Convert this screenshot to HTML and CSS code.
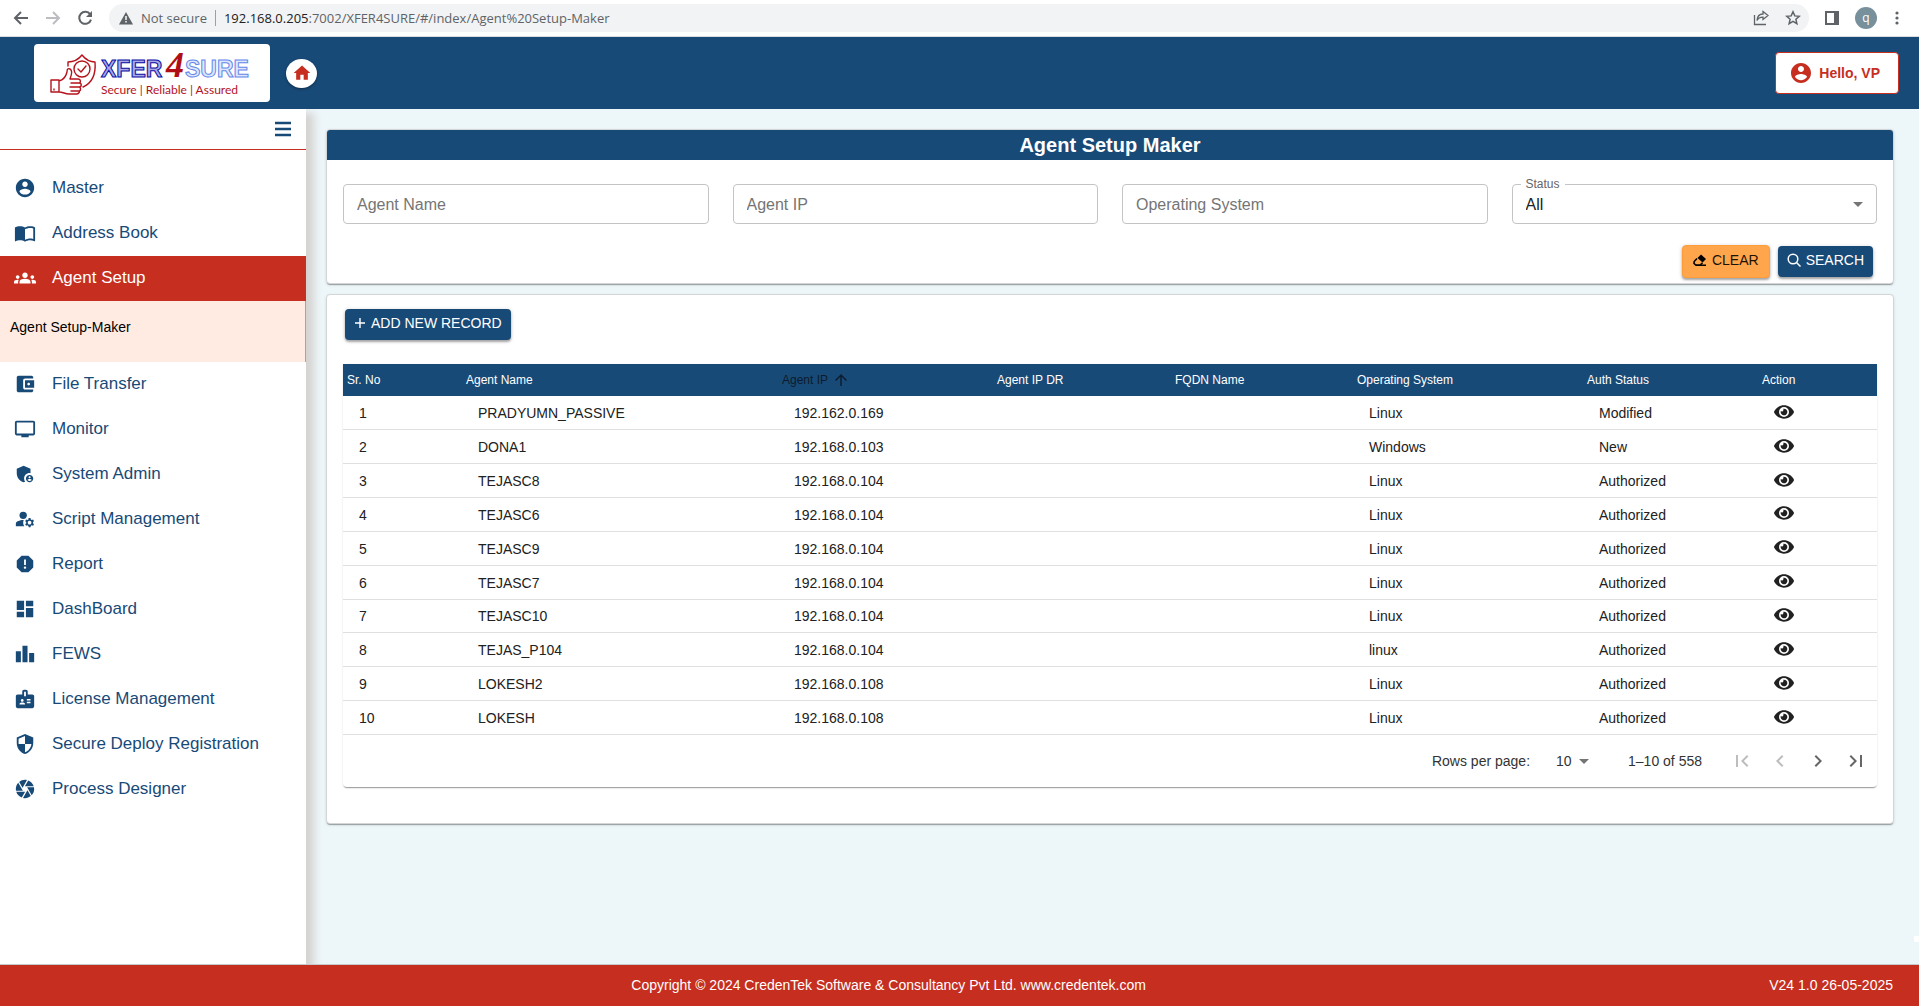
FILE: index.html
```html
<!DOCTYPE html>
<html lang="en">
<head>
<meta charset="utf-8">
<title>Agent Setup Maker</title>
<link rel="stylesheet" href="styles.css">
</head>
<body>
<svg class="sprite" aria-hidden="true">
  <symbol id="i-account" viewBox="0 0 24 24"><path d="M12 2C6.48 2 2 6.48 2 12s4.48 10 10 10 10-4.48 10-10S17.52 2 12 2zm0 3c1.66 0 3 1.34 3 3s-1.34 3-3 3-3-1.34-3-3 1.34-3 3-3zm0 14.2c-2.5 0-4.71-1.28-6-3.22.03-1.99 4-3.08 6-3.08 1.99 0 5.97 1.09 6 3.08-1.29 1.94-3.5 3.22-6 3.22z"/></symbol>
  <symbol id="i-book" viewBox="0 0 24 24"><path d="M21 5c-1.11-.35-2.33-.5-3.5-.5-1.95 0-4.05.4-5.5 1.5-1.45-1.1-3.55-1.5-5.5-1.5S2.45 4.9 1 6v14.65c0 .25.25.5.5.5.1 0 .15-.05.25-.05C3.1 20.45 5.05 20 6.5 20c1.95 0 4.05.4 5.5 1.5 1.35-.85 3.8-1.5 5.5-1.5 1.65 0 3.35.3 4.75 1.05.1.05.15.05.25.05.25 0 .5-.25.5-.5V6c-.6-.45-1.25-.75-2-1zm0 13.5c-1.1-.35-2.3-.5-3.5-.5-1.7 0-4.15.65-5.5 1.5V8c1.35-.85 3.8-1.5 5.5-1.5 1.2 0 2.4.15 3.5.5v11.5z"/></symbol>
  <symbol id="i-groups" viewBox="0 0 24 24"><path d="M12 12.75c1.63 0 3.07.39 4.24.9 1.08.48 1.76 1.56 1.76 2.73V18H6v-1.61c0-1.18.68-2.26 1.76-2.73 1.17-.52 2.61-.91 4.24-.91zM4 13c1.1 0 2-.9 2-2s-.9-2-2-2-2 .9-2 2 .9 2 2 2zm1.13 1.1c-.37-.06-.74-.1-1.13-.1-.99 0-1.93.21-2.78.58C.48 14.9 0 15.62 0 16.43V18h4.5v-1.61c0-.83.23-1.61.63-2.29zM20 13c1.1 0 2-.9 2-2s-.9-2-2-2-2 .9-2 2 .9 2 2 2zm4 3.43c0-.81-.48-1.53-1.22-1.85-.85-.37-1.79-.58-2.78-.58-.39 0-.76.04-1.13.1.4.68.63 1.46.63 2.29V18H24v-1.57zM12 6c1.66 0 3 1.34 3 3s-1.34 3-3 3-3-1.34-3-3 1.34-3 3-3z"/></symbol>
  <symbol id="i-wallet" viewBox="0 0 24 24"><path d="M21 18v1c0 1.1-.9 2-2 2H5c-1.11 0-2-.9-2-2V5c0-1.1.89-2 2-2h14c1.1 0 2 .9 2 2v1h-9c-1.11 0-2 .9-2 2v8c0 1.1.89 2 2 2h9zm-9-2h10V8H12v8zm4-2.5c-.83 0-1.5-.67-1.5-1.5s.67-1.5 1.5-1.5 1.5.67 1.5 1.5-.67 1.5-1.5 1.5z"/></symbol>
  <symbol id="i-tv" viewBox="0 0 24 24"><path d="M21 3H3c-1.1 0-2 .9-2 2v12c0 1.1.9 2 2 2h5v2h8v-2h5c1.1 0 1.99-.9 1.99-2L23 5c0-1.1-.9-2-2-2zm0 14H3V5h18v12z"/></symbol>
  <symbol id="i-admin" viewBox="0 0 24 24"><path d="M17 11c.34 0 .67.04 1 .09V6.27L10.5 3 3 6.27v4.91c0 4.54 3.2 8.79 7.5 9.82.55-.13 1.08-.32 1.6-.55-.69-.98-1.1-2.17-1.1-3.45 0-3.31 2.69-6 6-6z"/><path d="M17 13c-2.21 0-4 1.79-4 4s1.79 4 4 4 4-1.79 4-4-1.79-4-4-4zm0 1.38c.62 0 1.12.51 1.12 1.12s-.51 1.12-1.12 1.12-1.12-.51-1.12-1.12.5-1.12 1.12-1.12zm0 5.37c-.93 0-1.74-.46-2.24-1.17.05-.72 1.51-1.08 2.24-1.08s2.19.36 2.24 1.08c-.5.71-1.31 1.17-2.24 1.17z"/></symbol>
  <symbol id="i-manage" viewBox="0 0 24 24"><circle cx="10" cy="8" r="4"/><path d="M10.67 13.02c-.22-.01-.44-.02-.67-.02-2.42 0-4.68.67-6.61 1.82-.88.52-1.39 1.5-1.39 2.53V20h9.26c-.79-1.13-1.26-2.51-1.26-4 0-1.07.25-2.07.67-2.98zM20.75 16c0-.22-.03-.42-.06-.63l1.14-1.01-1-1.73-1.45.49c-.32-.27-.68-.48-1.08-.63L18 11h-2l-.3 1.49c-.4.15-.76.36-1.08.63l-1.45-.49-1 1.73 1.14 1.01c-.03.21-.06.41-.06.63s.03.42.06.63l-1.14 1.01 1 1.73 1.45-.49c.32.27.68.48 1.08.63L16 21h2l.3-1.49c.4-.15.76-.36 1.08-.63l1.45.49 1-1.73-1.14-1.01c.03-.21.06-.41.06-.63zM17 18c-1.1 0-2-.9-2-2s.9-2 2-2 2 .9 2 2-.9 2-2 2z"/></symbol>
  <symbol id="i-report" viewBox="0 0 24 24"><path d="M15.73 3H8.27L3 8.27v7.46L8.27 21h7.46L21 15.73V8.27L15.73 3zM12 17.3c-.72 0-1.3-.58-1.3-1.3 0-.72.58-1.3 1.3-1.3.72 0 1.3.58 1.3 1.3 0 .72-.58 1.3-1.3 1.3zm1-4.3h-2V7h2v6z"/></symbol>
  <symbol id="i-dash" viewBox="0 0 24 24"><path d="M3 13h8V3H3v10zm0 8h8v-6H3v6zm10 0h8V11h-8v10zm0-18v6h8V3h-8z"/></symbol>
  <symbol id="i-bars" viewBox="0 0 24 24"><path d="M7.5 21H2V9h5.5v12zm7.25-18h-5.5v18h5.5V3zM22 11h-5.5v10H22V11z"/></symbol>
  <symbol id="i-badge" viewBox="0 0 24 24"><path d="M20 7h-5V4c0-1.1-.9-2-2-2h-2c-1.1 0-2 .9-2 2v3H4c-1.1 0-2 .9-2 2v11c0 1.1.9 2 2 2h16c1.1 0 2-.9 2-2V9c0-1.1-.9-2-2-2zM9 12c.83 0 1.5.67 1.5 1.5S9.83 15 9 15s-1.5-.67-1.5-1.5S8.17 12 9 12zm3 6H6v-.75c0-1 2-1.5 3-1.5s3 .5 3 1.5V18zm1-9h-2V4h2v5zm5 7.5h-4V15h4v1.5zm0-3h-4V12h4v1.5z"/></symbol>
  <symbol id="i-shield" viewBox="0 0 24 24"><path d="M12 1 3 5v6c0 5.55 3.84 10.74 9 12 5.16-1.26 9-6.45 9-12V5l-9-4zm0 10.99h7c-.53 4.12-3.28 7.79-7 8.94V12H5V6.3l7-3.11v8.8z"/></symbol>
  <symbol id="i-camera" viewBox="0 0 24 24"><path d="M9.4 10.5l4.77-8.26C13.47 2.09 12.75 2 12 2c-2.4 0-4.6.85-6.32 2.25l3.66 6.35.06-.1zM21.54 9c-.92-2.92-3.15-5.26-6-6.34L11.88 9h9.66zm.26 1h-7.49l.29.5 4.76 8.25C21 16.97 22 14.61 22 12c0-.69-.07-1.35-.2-2zM8.54 12l-3.9-6.75C3.01 7.03 2 9.39 2 12c0 .69.07 1.35.2 2h7.49l-1.15-2zm-6.08 3c.92 2.92 3.15 5.26 6 6.34L12.12 15H2.46zm11.27 0l-3.9 6.76c.7.15 1.42.24 2.17.24 2.4 0 4.6-.85 6.32-2.25l-3.66-6.35-.93 1.6z"/></symbol>
  <symbol id="i-eye" viewBox="0 0 576 512"><path d="M572.52 241.4C518.29 135.59 410.93 64 288 64S57.68 135.64 3.48 241.41a32.35 32.35 0 0 0 0 29.19C57.71 376.41 165.07 448 288 448s230.32-71.64 284.52-177.41a32.35 32.35 0 0 0 0-29.19zM288 400a144 144 0 1 1 144-144 143.93 143.93 0 0 1-144 144zm0-240a95.31 95.31 0 0 0-25.31 3.79 47.85 47.85 0 0 1-66.9 66.9A95.78 95.78 0 1 0 288 160z"/></symbol>
  <symbol id="i-down" viewBox="0 0 24 24"><path d="m7 10 5 5 5-5z"/></symbol>
</svg>

<div class="browser">
  <button class="tool" aria-label="Back"><svg width="16" height="16" viewBox="0 0 16 16" fill="none" stroke="#5f6368" stroke-width="2"><path d="M15 8H2M8 2 2 8l6 6"/></svg></button>
  <button class="tool" aria-label="Forward"><svg width="16" height="16" viewBox="0 0 16 16" fill="none" stroke="#bbbdc0" stroke-width="2"><path d="M1 8h13M8 2l6 6-6 6"/></svg></button>
  <button class="tool" aria-label="Reload"><svg width="16" height="16" viewBox="0 0 16 16"><path d="M13.2 4.4A6 6 0 1 0 14 9.600" fill="none" stroke="#5f6368" stroke-width="2"/><path d="M15 1v6H9z" fill="#5f6368"/></svg></button>
  <div class="address">
    <svg width="14" height="14" viewBox="0 0 14 14"><path d="M7 1 0 13.500h14z" fill="#5f6368"/><path d="M6.200 5h1.600v4H6.200zM6.200 10h1.600v1.600H6.200z" fill="#f1f3f4"/></svg>
    <span class="insecure">Not secure</span>
    <span class="url"><b>192.168.0.205</b>:7002/XFER4SURE/#/index/Agent%20Setup-Maker</span>
    <button class="tool" aria-label="Share"><svg width="16" height="16" viewBox="0 0 16 16" fill="none" stroke="#5f6368" stroke-width="1.300"><path d="M1.500 5v9.500H13M10 1.500l5 4-5 4V7.200c-3 0-5 1-6 3.300.3-4 2.500-6.500 6-6.500z"/></svg></button>
    <button class="tool" aria-label="Bookmark"><svg width="16" height="16" viewBox="0 0 16 16" fill="none" stroke="#5f6368" stroke-width="1.500"><path d="M8 1.800l1.800 4.100 4.500.4-3.400 3 1 4.400L8 11.400l-3.900 2.300 1-4.400-3.400-3 4.500-.4z"/></svg></button>
  </div>
  <button class="tool" aria-label="Side panel"><svg width="14" height="14" viewBox="0 0 14 14"><path d="M1 1h12v12H1z" fill="none" stroke="#5f6368" stroke-width="2"/><path d="M9 1h4v12H9z" fill="#5f6368"/></svg></button>
  <button class="avatar" aria-label="Profile">q</button>
  <button class="tool" aria-label="Browser menu"><svg width="4" height="14" viewBox="0 0 4 14" fill="#5f6368"><circle cx="2" cy="2" r="1.600"/><circle cx="2" cy="7" r="1.600"/><circle cx="2" cy="12" r="1.600"/></svg></button>
</div>

<header class="topbar">
  <a class="logo" href="#">
    <svg width="236" height="58" viewBox="0 0 236 58" role="img">
      <g fill="none" stroke="#b5121b" stroke-width="1.400" stroke-linejoin="round" stroke-linecap="round">
        <path d="M34 22v-4c6 0 10-2 14-7 4 5 8 7 13 7 1 12-3 21-12 25"/>
        <circle cx="48" cy="25" r="8"/><path d="m44 25 3 3 5-6"/>
        <path d="M17 36h8v12h-8zM25 37c4-1 7-5 8-9 0-3 1-4 3-3 2 1 2 5 0 10h8c3 0 3 4 1 4 3 0 3 4 0 4 2 0 2 4 0 4 1 0 0 3-2 3h-8c-4 0-6-2-10-2M37 39h8M36 43h9M37 47h8"/>
        <path d="M20 45v1"/>
      </g>
      <text class="mark mark-dark" x="67" y="33">XFER</text>
      <text class="mark mark-light" x="151" y="33">SURE</text>
      <text class="mark-four" x="132" y="33">4</text>
      <text class="tagline" x="67" y="50">Secure | Reliable | Assured</text>
    </svg>
  </a>
  <a class="home" href="#" aria-label="Home"><svg width="20" height="20" viewBox="0 0 24 24"><path d="M10 20v-6h4v6h5v-8h3L12 3 2 12h3v8z"/></svg></a>
  <button class="user"><svg width="24" height="24"><use href="#i-account"/></svg>Hello, VP</button>
</header>

<div class="layout">
  <aside class="sidebar">
    <div class="toggle"><button aria-label="Toggle menu"><svg width="18" height="18" viewBox="0 0 18 18" fill="none" stroke="currentColor" stroke-width="2.500"><path d="M1 3h16M1 9h16M1 15h16"/></svg></button></div>
    <nav class="menu">
      <a href="#"><svg><use href="#i-account"/></svg>Master</a>
      <a href="#"><svg><use href="#i-book"/></svg>Address Book</a>
      <a href="#" class="active"><svg><use href="#i-groups"/></svg>Agent Setup</a>
      <a href="#" class="sub">Agent Setup-Maker</a>
      <a href="#"><svg><use href="#i-wallet"/></svg>File Transfer</a>
      <a href="#"><svg><use href="#i-tv"/></svg>Monitor</a>
      <a href="#"><svg><use href="#i-admin"/></svg>System Admin</a>
      <a href="#"><svg><use href="#i-manage"/></svg>Script Management</a>
      <a href="#"><svg><use href="#i-report"/></svg>Report</a>
      <a href="#"><svg><use href="#i-dash"/></svg>DashBoard</a>
      <a href="#"><svg><use href="#i-bars"/></svg>FEWS</a>
      <a href="#"><svg><use href="#i-badge"/></svg>License Management</a>
      <a href="#"><svg><use href="#i-shield"/></svg>Secure Deploy Registration</a>
      <a href="#"><svg><use href="#i-camera"/></svg>Process Designer</a>
    </nav>
  </aside>

  <main class="content">
    <section class="card">
      <h1>Agent Setup Maker</h1>
      <form class="filters">
        <div class="fields">
          <input type="text" placeholder="Agent Name" aria-label="Agent Name">
          <input type="text" placeholder="Agent IP" aria-label="Agent IP">
          <input type="text" placeholder="Operating System" aria-label="Operating System">
          <div class="select-field">
            <label for="status">Status</label>
            <select id="status"><option>All</option></select>
            <svg width="24" height="24"><use href="#i-down"/></svg>
          </div>
        </div>
        <div class="actions">
          <button type="reset" class="btn btn-clear"><svg width="14" height="14" viewBox="0 0 14 14"><path d="M8 1.500 13 6 9.600 9.400 4.500 5z"/><path d="M4 5.500 1.200 8.500 1 10.500 3 12.200h4L9.500 9.700" fill="none" stroke="#000" stroke-width="1.600"/><path d="M3 11.500h10V13H3z"/></svg>CLEAR</button>
          <button type="button" class="btn btn-search"><svg width="14" height="14" viewBox="0 0 14 14" fill="none" stroke="#fff" stroke-width="1.500"><circle cx="6" cy="6" r="4.800"/><path d="m9.500 9.500 4 4"/></svg>SEARCH</button>
        </div>
      </form>
    </section>

    <section class="card records">
      <button class="btn btn-add"><svg width="12" height="12" viewBox="0 0 12 12" fill="none" stroke="#fff" stroke-width="1.400"><path d="M6 1v10M1 6h10"/></svg>ADD NEW RECORD</button>
      <div class="grid">
        <table>
          <colgroup><col class="c-no"><col class="c-name"><col class="c-ip"><col class="c-dr"><col class="c-fqdn"><col class="c-os"><col class="c-auth"><col class="c-no"></colgroup>
          <thead><tr><th>Sr. No</th><th>Agent Name</th><th class="sorted"><span>Agent IP<svg width="18" height="18" viewBox="0 0 24 24"><path d="m4 12 1.410 1.410L11 7.830V20h2V7.830l5.580 5.590L20 12l-8-8-8 8z"/></svg></span></th><th>Agent IP DR</th><th>FQDN Name</th><th>Operating System</th><th>Auth Status</th><th>Action</th></tr></thead>
          <tbody>
            <tr><td>1</td><td>PRADYUMN_PASSIVE</td><td>192.162.0.169</td><td></td><td></td><td>Linux</td><td>Modified</td><td><button class="view" aria-label="View"><svg><use href="#i-eye"/></svg></button></td></tr>
            <tr><td>2</td><td>DONA1</td><td>192.168.0.103</td><td></td><td></td><td>Windows</td><td>New</td><td><button class="view" aria-label="View"><svg><use href="#i-eye"/></svg></button></td></tr>
            <tr><td>3</td><td>TEJASC8</td><td>192.168.0.104</td><td></td><td></td><td>Linux</td><td>Authorized</td><td><button class="view" aria-label="View"><svg><use href="#i-eye"/></svg></button></td></tr>
            <tr><td>4</td><td>TEJASC6</td><td>192.168.0.104</td><td></td><td></td><td>Linux</td><td>Authorized</td><td><button class="view" aria-label="View"><svg><use href="#i-eye"/></svg></button></td></tr>
            <tr><td>5</td><td>TEJASC9</td><td>192.168.0.104</td><td></td><td></td><td>Linux</td><td>Authorized</td><td><button class="view" aria-label="View"><svg><use href="#i-eye"/></svg></button></td></tr>
            <tr><td>6</td><td>TEJASC7</td><td>192.168.0.104</td><td></td><td></td><td>Linux</td><td>Authorized</td><td><button class="view" aria-label="View"><svg><use href="#i-eye"/></svg></button></td></tr>
            <tr><td>7</td><td>TEJASC10</td><td>192.168.0.104</td><td></td><td></td><td>Linux</td><td>Authorized</td><td><button class="view" aria-label="View"><svg><use href="#i-eye"/></svg></button></td></tr>
            <tr><td>8</td><td>TEJAS_P104</td><td>192.168.0.104</td><td></td><td></td><td>linux</td><td>Authorized</td><td><button class="view" aria-label="View"><svg><use href="#i-eye"/></svg></button></td></tr>
            <tr><td>9</td><td>LOKESH2</td><td>192.168.0.108</td><td></td><td></td><td>Linux</td><td>Authorized</td><td><button class="view" aria-label="View"><svg><use href="#i-eye"/></svg></button></td></tr>
            <tr><td>10</td><td>LOKESH</td><td>192.168.0.108</td><td></td><td></td><td>Linux</td><td>Authorized</td><td><button class="view" aria-label="View"><svg><use href="#i-eye"/></svg></button></td></tr>
          </tbody>
        </table>
        <div class="pager">
          <label for="rows">Rows per page:</label>
          <div class="rows">
            <select id="rows"><option>10</option></select>
            <svg width="24" height="24"><use href="#i-down"/></svg>
          </div>
          <span class="range">1–10 of 558</span>
          <div class="pages">
            <button disabled aria-label="First page"><svg viewBox="0 0 24 24"><path d="M18.410 16.590 13.820 12l4.590-4.590L17 6l-6 6 6 6zM6 6h2v12H6z"/></svg></button>
            <button disabled aria-label="Previous page"><svg viewBox="0 0 24 24"><path d="M15.410 7.410 14 6l-6 6 6 6 1.410-1.410L10.830 12z"/></svg></button>
            <button aria-label="Next page"><svg viewBox="0 0 24 24"><path d="M10 6 8.590 7.410 13.170 12l-4.580 4.590L10 18l6-6z"/></svg></button>
            <button aria-label="Last page"><svg viewBox="0 0 24 24"><path d="M5.590 7.410 10.180 12l-4.590 4.590L7 18l6-6-6-6zM16 6h2v12h-2z"/></svg></button>
          </div>
        </div>
      </div>
    </section>
    <span class="edge-tab"></span>
  </main>
</div>

<footer class="footer">
  <span class="copyright">Copyright © 2024 CredenTek Software &amp; Consultancy Pvt Ltd. www.credentek.com</span>
  <span>V24 1.0 26-05-2025</span>
</footer>
</body>
</html>
```
FILE: styles.css
```css
:root {
  --navy: #184a78;
  --red: #c62e1f;
  --page: #edf6f9;
}

* { box-sizing: border-box; }

body {
  margin: 0;
  min-height: 100vh;
  display: flex;
  flex-direction: column;
  font-family: "Liberation Sans", Arial, sans-serif;
  font-size: 14px;
  color: #212121;
  background: var(--page);
}

button, input, select { font: inherit; color: inherit; }
button { border: 0; background: none; padding: 0; cursor: pointer; }
a { text-decoration: none; color: inherit; }
svg { display: block; flex: none; }
.sprite { position: absolute; width: 0; height: 0; }

/* Browser toolbar */
.browser {
  display: flex;
  align-items: center;
  gap: 16px;
  height: 37px;
  padding: 0 20px 0 13px;
  background: #fff;
  border-bottom: 1px solid #dadce0;
  font-family: "Open Sans", "Noto Sans", sans-serif;
  font-size: 13px;
  color: #5f6368;
}
.browser .tool { flex: none; }
.address {
  flex: 1;
  display: flex;
  align-items: center;
  gap: 8px;
  height: 28px;
  padding: 0 8px 0 10px;
  border-radius: 14px;
  background: #f1f3f4;
}
.address .tool { margin-left: 8px; }
.insecure { padding-right: 8px; border-right: 1px solid #9aa0a6; line-height: 16px; }
.url { flex: 1; }
.url b { font-weight: 400; color: #202124; }
.avatar {
  width: 22px;
  height: 22px;
  margin-right: 2px;
  border-radius: 50%;
  background: #78909c;
  color: #fff;
  font-size: 12px;
  line-height: 20px;
}

/* Application header */
.topbar {
  display: flex;
  align-items: center;
  gap: 16px;
  height: 72px;
  padding: 0 20px 0 34px;
  background: var(--navy);
}
.logo { border-radius: 4px; background: #fff; }
.mark { font: 700 23px "Liberation Sans", Arial, sans-serif; stroke-width: 1; }
.mark-dark { fill: #a9a9e6; stroke: #0a0aa5; }
.mark-light { fill: #dfe7fb; stroke: #6488ea; }
.mark-four { font: italic 700 36px "Liberation Serif", "Times New Roman", serif; fill: #b00e14; }
.tagline { font: 12px Lato, sans-serif; fill: #b5121b; }
.home {
  display: grid;
  place-items: center;
  width: 31px;
  height: 29px;
  border-radius: 50%;
  background: #fff;
  fill: var(--red);
  box-shadow: 0 1px 3px rgba(0, 0, 0, .4);
}
.user {
  display: flex;
  align-items: center;
  gap: 6px;
  height: 42px;
  margin-left: auto;
  padding: 0 18px 0 13px;
  border: 1px solid var(--red);
  border-radius: 4px;
  background: #fff;
  color: var(--red);
  fill: var(--red);
  font-weight: 700;
}

/* Sidebar */
.layout { flex: 1; display: flex; }
.sidebar {
  flex: 0 0 306px;
  background: #fff;
  color: var(--navy);
  box-shadow: 6px 6px 8px 2px #d5d3d2;
  clip-path: inset(0 -20px 0 0);
}
.toggle {
  display: flex;
  justify-content: flex-end;
  height: 41px;
  padding: 11px 14px 0 0;
  border-bottom: 1px solid var(--red);
}
.toggle button { height: 18px; }
.menu { padding-top: 16px; }
.menu a {
  display: flex;
  align-items: center;
  gap: 16px;
  height: 45px;
  padding: 0 0 2px 14px;
  font-size: 17px;
  fill: currentColor;
}
.menu svg { width: 22px; height: 22px; }
.menu .active { background: var(--red); color: #fff; }
.menu .sub {
  height: 61px;
  padding: 0 0 10px 10px;
  border-right: 1px solid #4fc3e8;
  background: #ffebe2;
  color: #000;
  font-size: 14px;
}

/* Cards */
.content {
  position: relative;
  flex: 1;
  min-width: 0;
  display: flex;
  flex-direction: column;
  gap: 10px;
  padding: 20px 25px 20px 20px;
}
.card {
  border: 1px solid #d3d5d6;
  border-radius: 4px;
  background: #fff;
  box-shadow: 0 2px 1px -1px rgba(0, 0, 0, .3), 0 1px 3px rgba(0, 0, 0, .12);
}
h1 {
  margin: 0;
  border-radius: 3px 3px 0 0;
  background: var(--navy);
  color: #fff;
  font-size: 20px;
  line-height: 30px;
  text-align: center;
}
.filters { padding: 24px 16px 5px; }
.fields { display: grid; grid-template-columns: repeat(4, 1fr); gap: 24px; }
.fields input, .fields select {
  width: 100%;
  height: 40px;
  padding: 0 13px;
  border: 1px solid #c4c4c4;
  border-radius: 4px;
  background: transparent;
  font-size: 16px;
  outline: none;
}
.fields input { padding-top: 1px; }
.fields input::placeholder { color: #757575; opacity: 1; }
select { appearance: none; }
.select-field { display: grid; align-items: center; position: relative; }
.select-field select, .select-field svg { grid-area: 1 / 1; }
.select-field svg {
  justify-self: end;
  margin-right: 7px;
  fill: #757575;
  pointer-events: none;
}
.select-field label {
  position: absolute;
  top: -7px;
  left: 9px;
  padding: 0 5px;
  background: #fff;
  color: #666;
  font-size: 12px;
  line-height: 14px;
}

/* Buttons */
.actions {
  display: flex;
  justify-content: flex-end;
  align-items: center;
  gap: 8px;
  padding: 21px 4px 0 0;
}
.btn {
  display: flex;
  align-items: center;
  gap: 5px;
  height: 31px;
  padding: 0 9px 3px;
  border-radius: 4px;
  background: var(--navy);
  color: #fff;
  line-height: 16px;
  box-shadow: 0 2px 2px rgba(0, 0, 0, .25), 0 1px 4px rgba(0, 0, 0, .2);
}
.btn-clear {
  height: 33px;
  padding: 0 10px 3px;
  border: 1px solid #ff9d3b;
  background: #ffa64d;
  color: #1d1206;
}

/* Records table */
.records { padding: 14px 16px 36px; }
.btn-add { margin: 0 2px 24px; }
.grid {
  border-radius: 0 0 4px 4px;
  box-shadow: 0 2px 1px -1px rgba(0, 0, 0, .3), 0 1px 2px rgba(0, 0, 0, .16);
}
table {
  width: 100%;
  height: 371px;
  table-layout: fixed;
  border-collapse: collapse;
}
.c-no { width: 119px; }
.c-name { width: 316px; }
.c-ip { width: 215px; }
.c-dr { width: 178px; }
.c-fqdn { width: 182px; }
.c-os { width: 230px; }
.c-auth { width: 175px; }
th {
  height: 32px;
  padding: 0 4px;
  background: var(--navy);
  color: #fff;
  font-size: 12px;
  font-weight: 400;
  text-align: left;
}
.sorted { color: #0c1c2c; fill: #0c1c2c; }
.sorted span { display: flex; align-items: center; gap: 4px; }
td { height: 33px; padding: 1px 16px 0; border-bottom: 1px solid #e0e0e0; }
.view { display: block; margin-top: -3px; fill: #212121; }
.view svg { width: 20px; height: 18px; }

/* Pagination */
.pager {
  display: flex;
  align-items: center;
  justify-content: flex-end;
  height: 52px;
  padding: 0 2px 1px 0;
  color: #333;
}
.rows { display: grid; align-items: center; width: 46px; margin: 0 32px 0 20px; }
.rows select, .rows svg { grid-area: 1 / 1; }
.rows select { padding: 0 24px 0 6px; border: 0; background: none; outline: none; }
.rows svg { justify-self: end; fill: #757575; pointer-events: none; }
.pages { display: flex; margin-left: 21px; }
.pages button { padding: 0 7px; fill: #666; }
.pages button:disabled { fill: #bdbdbd; }
.pages svg { width: 24px; height: 24px; }

.edge-tab { position: absolute; right: 0; bottom: 22px; width: 5px; height: 6px; background: #fff; }

/* Footer */
.footer {
  display: flex;
  align-items: center;
  height: 42px;
  padding: 0 26px 2px 8px;
  border-top: 1px solid #c4c9cc;
  background: var(--red);
  color: #fff;
}
.copyright { flex: 1; text-align: center; }
```
